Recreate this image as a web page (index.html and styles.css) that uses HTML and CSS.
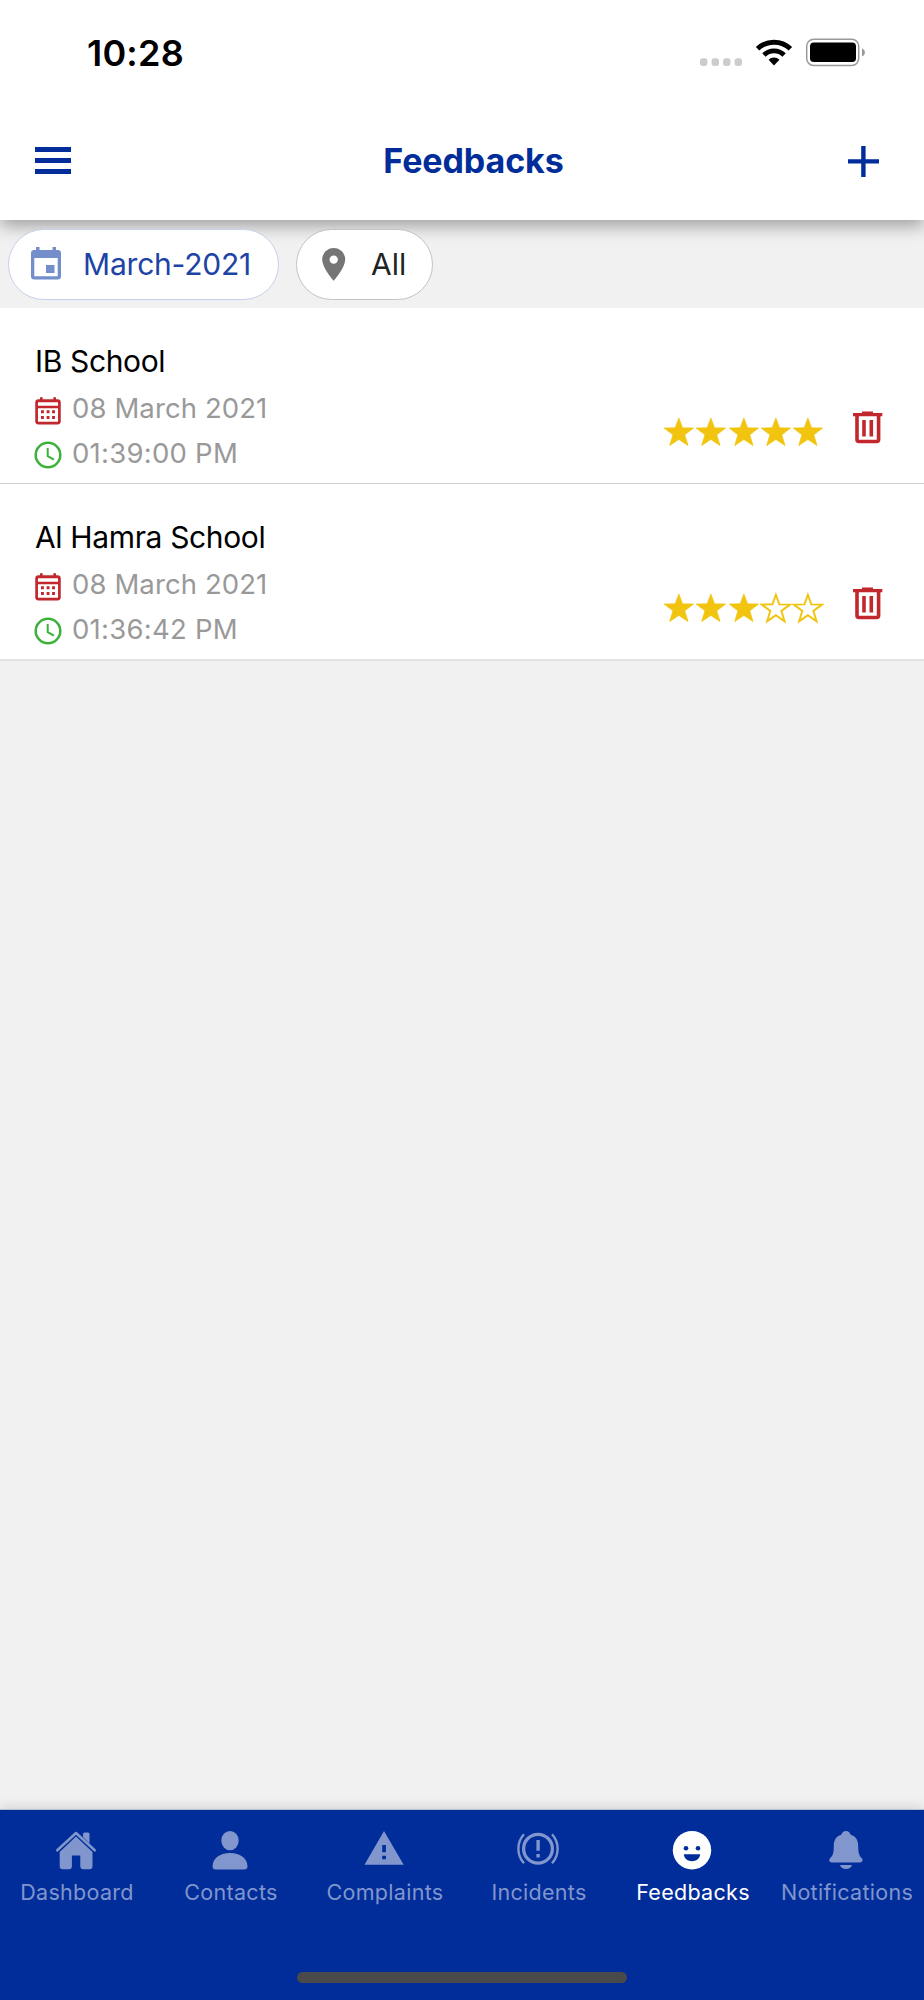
FILE: index.html
```html
<!DOCTYPE html>
<html lang="en">
<head>
<meta charset="utf-8">
<title>Feedbacks</title>
<link rel="stylesheet" href="styles.css">
</head>
<body>
<svg class="defs" aria-hidden="true">
  <symbol id="star" viewBox="0 0 33 34"><path d="M16.2 2.6 L20 12.7 L31.3 13 L22.3 19.9 L25.6 30.9 L16.2 24.6 L6.8 30.9 L10.1 19.9 L1.1 13 L12.4 12.7 Z" fill="#f1c40f" stroke="#f1c40f" stroke-width=".7" stroke-linejoin="round"/></symbol>
  <symbol id="star-outline" viewBox="0 0 33 34"><path d="M16.2 3.5 L19.7 13.3 L30.6 13.5 L21.9 20 L25.1 30.6 L16.2 24.4 L7.3 30.6 L10.5 20 L1.8 13.5 L12.7 13.3 Z" fill="none" stroke="#f1c40f" stroke-width="2"/></symbol>
  <symbol id="trash" viewBox="0 0 30 33"><path d="M0 2h9V.4h11V2h9.300v3.200H0Z" fill="#c1272d"/><path d="M4 4v24.500q0 2 2 2h17.600q2 0 2-2V4M11 9v16.500M18.300 9v16.500" fill="none" stroke="#c1272d" stroke-width="3.600"/></symbol>
  <symbol id="calendar" viewBox="0 0 26 28"><path d="M1.600 10V5.500q0-1.800 1.800-1.800h19.200q1.800 0 1.800 1.800v18.800q0 1.800-1.800 1.800H3.400q-1.800 0-1.800-1.800V10H24" fill="none" stroke="#c1272d" stroke-width="2.700"/><path d="M5 .3h2.700v3.500H5ZM18.300.3H21v3.500h-2.700ZM1 3.400h24V5.300H1Z" fill="#c1272d"/><path d="M6 13.300h2.900v2.900H6Zm5.600 0h2.900v2.900h-2.900Zm5.500 0H20v2.900h-2.900ZM6 19h2.900v2.900H6Zm5.600 0h2.900v2.900h-2.900Zm5.500 0H20v2.900h-2.900Z" fill="#c1272d"/></symbol>
  <symbol id="clock" viewBox="0 0 28 28"><circle cx="14" cy="14" r="12.300" fill="none" stroke="#3cb13a" stroke-width="2.500"/><path d="M13.700 7v8.100l6.200 3.600" fill="none" stroke="#3cb13a" stroke-width="2"/></symbol>
</svg>

<header class="header">
  <div class="status">
    <time class="status-time">10:28</time>
    <svg class="status-icons" viewBox="0 0 168 30">
      <g fill="#ccc"><rect x="0" y="20.300" width="7.400" height="7.600" rx="2.700"/><rect x="11.600" y="20.300" width="7.400" height="7.600" rx="2.700"/><rect x="23.100" y="20.300" width="7.400" height="7.600" rx="2.700"/><rect x="34.600" y="20.300" width="7.400" height="7.600" rx="2.700"/></g>
      <g fill="none" stroke="#000"><path d="M57.600 10.800a23.500 23.500 0 0 1 32.800 0" stroke-width="5"/><path d="M63.900 17a14.600 14.600 0 0 1 20.200 0" stroke-width="4.800"/></g>
      <path d="M68.600 21.800a7.500 7.500 0 0 1 10.800 0L74 27.500Z"/>
      <rect x="106.700" y="1.200" width="52" height="26.300" rx="7" fill="none" stroke="#999" stroke-width="1.500"/>
      <rect x="110" y="4.500" width="46" height="19.600" rx="3.800"/>
      <path d="M162 10.200q3 1.500 3 4.200t-3 4.200Z" fill="#999"/>
    </svg>
  </div>
  <div class="toolbar">
    <svg class="menu-icon" viewBox="0 0 36 28"><path d="M0 0h36v5H0ZM0 11h36v5H0ZM0 22h36v5H0Z" fill="#002d99"/></svg>
    <h1 class="title">Feedbacks</h1>
    <svg class="plus-icon" viewBox="0 0 31 31"><path d="M0 13.200h13.200V0h4.400v13.200H31v4.400H17.600V31h-4.400V17.600H0Z" fill="#002d99"/></svg>
  </div>
</header>

<div class="filters">
  <div class="chip chip-date">
    <svg class="chip-date-icon" viewBox="0 0 30 33"><path fill-rule="evenodd" d="M3.300 3H5V0h3.500v3h13V0H25v3h1.700Q30 3 30 6.300v23q0 3.200-3.300 3.200H3.300Q0 32.500 0 29.300v-23Q0 3 3.300 3ZM3.300 11v18.200h23.400V11ZM15 18h8.500v8H15Z" fill="#738ecb"/></svg>
    <span class="chip-date-text">March-2021</span>
  </div>
  <div class="chip chip-place">
    <svg class="pin-icon" viewBox="0 0 24 33"><path fill-rule="evenodd" d="M11.700 0A11.500 11.500 0 0 1 23.200 11.500C23.200 20 11.700 32.800 11.700 32.800S.2 20 .2 11.500A11.500 11.500 0 0 1 11.700 0Zm0 7.400a4.200 4.200 0 1 0 0 8.400 4.200 4.200 0 0 0 0-8.400Z" fill="#757575"/></svg>
    <span class="chip-place-text">All</span>
  </div>
</div>

<main class="list">
  <article class="row">
    <div class="info">
      <h2 class="name">IB School</h2>
      <div class="meta"><svg class="cal-icon"><use href="#calendar"/></svg><span class="date">08 March 2021</span></div>
      <div class="meta"><svg class="clock-icon"><use href="#clock"/></svg><span class="time">01:39:00 PM</span></div>
    </div>
    <div class="stars"><svg class="star"><use href="#star"/></svg><svg class="star"><use href="#star"/></svg><svg class="star"><use href="#star"/></svg><svg class="star"><use href="#star"/></svg><svg class="star"><use href="#star"/></svg></div>
    <svg class="trash"><use href="#trash"/></svg>
  </article>
  <article class="row">
    <div class="info">
      <h2 class="name">Al Hamra School</h2>
      <div class="meta"><svg class="cal-icon"><use href="#calendar"/></svg><span class="date">08 March 2021</span></div>
      <div class="meta"><svg class="clock-icon"><use href="#clock"/></svg><span class="time">01:36:42 PM</span></div>
    </div>
    <div class="stars"><svg class="star"><use href="#star"/></svg><svg class="star"><use href="#star"/></svg><svg class="star"><use href="#star"/></svg><svg class="star"><use href="#star-outline"/></svg><svg class="star"><use href="#star-outline"/></svg></div>
    <svg class="trash"><use href="#trash"/></svg>
  </article>
</main>

<footer class="footer">
  <nav class="tabs">
    <a class="tab"><svg class="tab-icon" viewBox="0 0 44 40"><path d="M3.300 19.300 22 2 40.700 19.300" fill="none" stroke="#8096cc" stroke-width="2.600" stroke-linecap="round" stroke-linejoin="round"/><path d="M29 6V3q0-1.500 1.500-1.500H34q1.500 0 1.500 1.500v9.500ZM22 5.600 38.500 21v14.300q0 3-3 3h-6.200q-3 0-3-3V24.500h-8.400v10.800q0 3-3 3H8.700q-3 0-3-3V21Z" fill="#8096cc"/></svg><span class="tab-label dashboard">Dashboard</span></a>
    <a class="tab"><svg class="tab-icon" viewBox="0 0 44 40"><ellipse cx="22" cy="9.600" rx="8.700" ry="9.600" fill="#8096cc"/><path d="M4.600 35.500C4.600 27.500 11.500 22 22 22s17.500 5.500 17.500 13.500q0 3-3.300 3H7.800q-3.200 0-3.200-3Z" fill="#8096cc"/></svg><span class="tab-label contacts">Contacts</span></a>
    <a class="tab"><svg class="tab-icon" viewBox="0 0 44 40"><path fill-rule="evenodd" d="M22 0 41.700 33.700H2.500ZM20.200 14v7.300h3.700V14Zm0 10.800v3.500h3.700v-3.500Z" fill="#8096cc"/></svg><span class="tab-label complaints">Complaints</span></a>
    <a class="tab"><svg class="tab-icon" viewBox="0 0 44 40"><g fill="none" stroke="#8096cc"><circle cx="22" cy="17.700" r="14.400" stroke-width="3.300"/><path d="M8 3.200a21.500 21.500 0 0 0 0 29M36 3.200a21.500 21.500 0 0 1 0 29" stroke-width="2.400"/></g><path d="M20.400 9h3.400v10.700h-3.400Zm0 14h3.400v3.500h-3.400Z" fill="#8096cc"/></svg><span class="tab-label incidents">Incidents</span></a>
    <a class="tab tab-active"><svg class="tab-icon" viewBox="0 0 44 40"><circle cx="22" cy="19.200" r="19.200" fill="#fff"/><circle cx="16" cy="17.200" r="2.300" fill="#002d99"/><circle cx="28" cy="17.200" r="2.300" fill="#002d99"/><path d="M13.800 23.300h16.400c-.7 9.200-15.700 9.200-16.400 0Z" fill="#002d99"/></svg><span class="tab-label feedbacks">Feedbacks</span></a>
    <a class="tab"><svg class="tab-icon" viewBox="0 0 44 40"><path d="M22 0c2.300 0 3.900 1.400 4.800 3.800 5 1.500 7.400 5.700 7.400 10.700 0 8 1 10 3.200 12.300 2.300 2.300.800 4.700-1.200 4.700H7.700c-2 0-3.500-2.400-1.200-4.700C8.800 24.500 9.800 22.500 9.800 14.500c0-5 2.300-9.200 7.400-10.700C18.100 1.400 19.700 0 22 0ZM16 33.900h12c-1.200 5.300-10.800 5.300-12 0Z" fill="#8096cc"/></svg><span class="tab-label notifications">Notifications</span></a>
  </nav>
  <div class="home-indicator"></div>
</footer>
</body>
</html>
```
FILE: styles.css
```css
* { box-sizing: border-box; }
body {
  margin: 0;
  height: 2000px;
  display: flex;
  flex-direction: column;
  background: #f1f1f1;
  font-family: Inter, "Liberation Sans", sans-serif;
  overflow: hidden;
}
svg { display: block; flex: none; overflow: visible; }
h1, h2 { margin: 0; }
span, h1, h2, time { white-space: nowrap; }
.defs { width: 0; height: 0; }

.header {
  position: relative;
  flex: none;
  height: 220px;
  background: #fff;
  box-shadow: 0 6px 16px rgba(0, 0, 0, .34);
}
.status {
  height: 106px;
  display: flex;
  justify-content: space-between;
  align-items: flex-start;
  padding: 31px 56px 0 87px;
}
.status-time { font-size: 36px; line-height: 44px; font-weight: 600; letter-spacing: .2px; }
.status-icons { width: 168px; height: 30px; margin: 7px 0 0; }
.toolbar {
  display: flex;
  align-items: center;
  height: 110px;
  padding: 0 45px 0 35px;
}
.menu-icon { width: 36px; height: 28px; }
.title {
  flex: 1;
  padding-left: 28px;
  text-align: center;
  color: #002d99;
  font-size: 34px;
  line-height: 42px;
  font-weight: 700;
  letter-spacing: -.1px;
}
.plus-icon { width: 31px; height: 31px; }

.filters {
  flex: none;
  display: flex;
  gap: 17px;
  height: 88px;
  padding: 9px 8px;
}
.chip {
  position: relative;
  display: flex;
  align-items: center;
  height: 71px;
  border: 1px solid #c3c3c3;
  border-radius: 36px;
  background: #fff;
  font-size: 30px;
  line-height: 36px;
}
.chip-date { width: 271px; padding-left: 22px; border-color: #c5d0ea; color: #1d43a5; }
.chip-date-icon { width: 30px; height: 33px; margin: 0 22px 2px 0; }
.chip-date-text { letter-spacing: -.2px; margin-bottom: 1px; }
.chip-place { width: 137px; padding-left: 25px; color: #222; }
.chip-place-text { margin-bottom: 1px; }
.pin-icon { width: 24px; height: 33px; margin-right: 25px; }

.list { flex: none; border-bottom: 1px solid #e4e4e4; }
.row {
  display: flex;
  height: 176px;
  padding: 35px 41px 0 35px;
  border-bottom: 1px solid #d1d1d1;
  background: #fff;
}
.row:last-child { border-color: #e4e4e4; }
.info { flex: 1; }
.name { font-size: 30px; line-height: 36px; font-weight: 400; color: #000; margin-bottom: 8px; letter-spacing: -.36px; }
.meta {
  display: flex;
  height: 44.500px;
  color: #999;
  font-size: 27.500px;
  line-height: 42px;
}
.cal-icon { width: 26px; height: 28px; margin: 9.500px 11px 0 0; }
.clock-icon { width: 28px; height: 28px; margin: 9px 10px 0 -1px; }
.date { letter-spacing: .1px; }
.time { letter-spacing: .25px; }
.stars { display: flex; padding-top: 71.500px; }
.star { width: 32.300px; height: 34px; overflow: visible; }
.trash { width: 30px; height: 33px; margin: 68px 0 0 28.500px; }

.footer {
  margin-top: auto;
  height: 191px;
  background: #002d99;
  border-top: 1px solid #b9bfcd;
  box-shadow: 0 -2px 12px rgba(0, 0, 0, .12);
}
.tabs { display: flex; height: 162px; padding-top: 21px; }
.tab {
  flex: 1 1 0;
  min-width: 0;
  display: flex;
  flex-direction: column;
  align-items: center;
  color: #8096cc;
}
.tab-active { color: #fff; }
.tab-icon { width: 44px; height: 40px; margin-left: -2px; }
.tab-label { margin-top: 8px; font-size: 21.500px; line-height: 27px; letter-spacing: .3px; }
.home-indicator { width: 330px; height: 11px; margin-left: 297px; border-radius: 6px; background: #4a4a4a; }
```
